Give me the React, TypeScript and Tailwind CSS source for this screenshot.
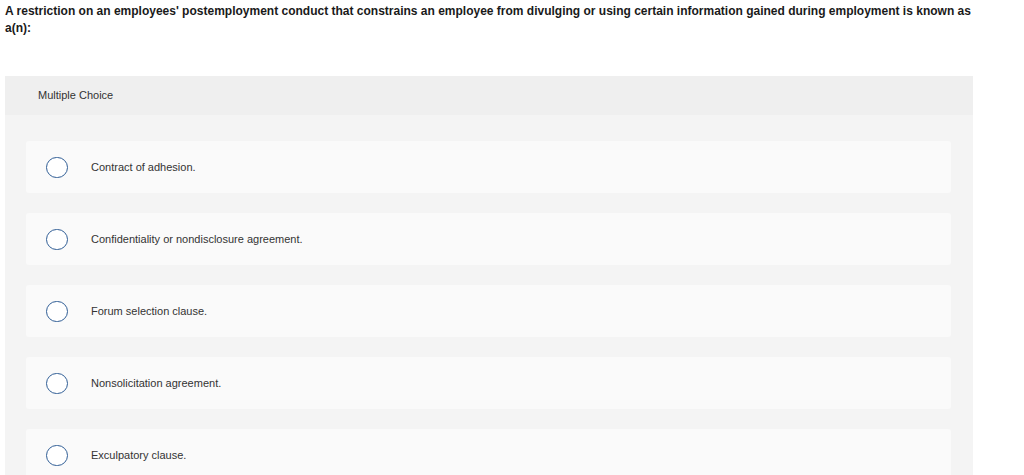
const OPTIONS = [
  'Contract of adhesion.',
  'Confidentiality or nondisclosure agreement.',
  'Forum selection clause.',
  'Nonsolicitation agreement.',
  'Exculpatory clause.',
]

function Radio() {
  return <span className="block w-[22px] h-[21px] rounded-full border border-[#2f5d95] bg-white shrink-0" />
}

export default function App() {
  return (
    <div className="h-[475px] overflow-hidden bg-white text-[#222] font-['Liberation_Sans',Arial,sans-serif]">
      <p className="px-[5px] pt-[3px] text-[12px] leading-[17px] font-bold text-[#1a1a1a]">
        A restriction on an employees' postemployment conduct that constrains an employee from divulging or using certain information gained during employment is known as
        <br />
        a(n):
      </p>

      <div className="mt-[39px] ml-[5px] w-[968px] bg-[#f4f4f4]">
        <div className="h-[39px] bg-[#efefef] flex items-center pl-[33px] text-[11px] text-[#333]">
          Multiple Choice
        </div>
        <div className="flex flex-col gap-[20px] pt-[26px] pl-[21px] pr-[22px] pb-[20px]">
          {OPTIONS.map((opt) => (
            <div key={opt} className="h-[52px] rounded-[3px] bg-[#fafafa] flex items-center pl-[20px]">
              <Radio />
              <span className="ml-[23px] text-[11px] text-[#333]">{opt}</span>
            </div>
          ))}
        </div>
      </div>
    </div>
  )
}
